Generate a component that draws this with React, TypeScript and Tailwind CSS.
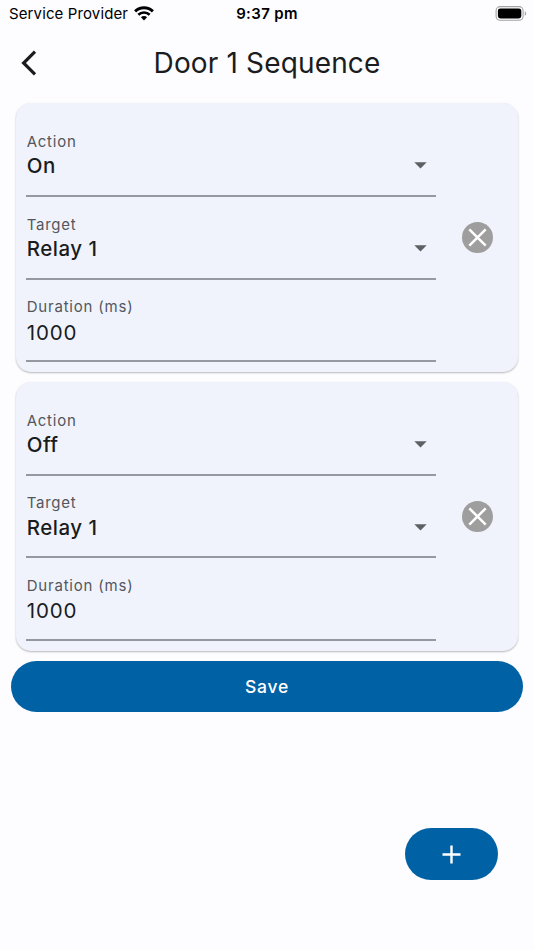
import { useState } from 'react';

type Step = {
  id: number;
  action: string;
  target: string;
  duration: number;
};

const initialSteps: Step[] = [
  { id: 1, action: 'On', target: 'Relay 1', duration: 1000 },
  { id: 2, action: 'Off', target: 'Relay 1', duration: 1000 },
];

function StatusBar() {
  return (
    <div className="grid h-7 grid-cols-3 items-center pl-[9px] pr-[7px] text-black">
      <div className="flex items-center gap-[6px]">
        <span className="whitespace-nowrap text-[15px] leading-7 tracking-[0.12px]">Service Provider</span>
        <svg width="20" height="15" viewBox="0 0 20 15" className="-mt-[2px] shrink-0" fill="none" stroke="currentColor">
          <path d="M1.1 5.4a12.8 12.8 0 0 1 17.8 0" strokeWidth="2.9" />
          <path d="M4.3 8.8a8.2 8.2 0 0 1 11.4 0" strokeWidth="2.6" />
          <path d="M10 14.4 6.9 11.3a4.4 4.4 0 0 1 6.2 0z" fill="currentColor" stroke="none" />
        </svg>
      </div>
      <span className="pr-[2px] text-center text-[15px] font-semibold leading-7 tracking-[0.35px]">9:37 pm</span>
      <svg width="32" height="15" viewBox="0 0 32 15" className="-mt-[2px] justify-self-end">
        <rect x="1.1" y="0.6" width="27" height="13.6" rx="4" fill="none" stroke="#a3a3a5" strokeWidth="1.1" />
        <rect x="2.9" y="2.4" width="23.4" height="10" rx="2.4" fill="#000" />
        <path d="M29.8 5.2v4.6c1.9-.8 1.9-3.8 0-4.6z" fill="#a3a3a5" />
      </svg>
    </div>
  );
}

function SelectField({ label, value }: { label: string; value: string }) {
  return (
    <div className="h-[82.6px] border-b-2 border-[#9598a0] pl-[0.7px] pt-[17.6px]">
      <p className="text-[15px] leading-5 tracking-[0.75px] text-[#53575d]">{label}</p>
      <div className="mt-[1.4px] flex h-[26px] items-center justify-between pr-[9px]">
        <span className="text-[20.5px] font-[450] leading-[26px] tracking-[0.5px] text-[#1a1c1e]">{value}</span>
        <svg width="13" height="7" viewBox="0 0 13 7" className="-mt-px">
          <path d="M0.3 0.3h12.4L6.5 6.5z" fill="#5e6063" />
        </svg>
      </div>
    </div>
  );
}

function TextField({ label, value }: { label: string; value: number }) {
  return (
    <div className="h-[82.6px] border-b-2 border-[#9598a0] pl-[0.7px] pt-[17.4px]">
      <p className="text-[15px] leading-5 tracking-[0.8px] text-[#53575d]">{label}</p>
      <p className="mt-[2.6px] text-[20.5px] leading-[26px] tracking-[0.9px] text-[#1a1c1e]">{value}</p>
    </div>
  );
}

function StepCard({ step, onRemove }: { step: Step; onRemove: () => void }) {
  return (
    <div className="flex h-[269px] items-center justify-between rounded-[15px] bg-[#f0f3fb] pl-[10.5px] pr-[25.5px] shadow-[0_1px_2px_rgba(0,0,0,0.28)]">
      <div className="w-[410px] pt-[1px]">
        <SelectField label="Action" value={step.action} />
        <SelectField label="Target" value={step.target} />
        <TextField label="Duration (ms)" value={step.duration} />
      </div>
      <button onClick={onRemove} aria-label="Remove step">
        <svg width="31" height="31" viewBox="0 0 31 31">
          <circle cx="15.5" cy="15.5" r="15.5" fill="#9e9e9e" />
          <path d="M7.3 7.3 23.7 23.7M23.7 7.3 7.3 23.7" stroke="#fff" strokeWidth="2.5" />
        </svg>
      </button>
    </div>
  );
}

export default function App() {
  const [steps, setSteps] = useState(initialSteps);

  const addStep = () =>
    setSteps([...steps, { id: Date.now(), action: 'On', target: 'Relay 1', duration: 1000 }]);

  return (
    <div className="relative flex h-[950px] w-[534px] flex-col overflow-hidden bg-[#fdfcff] font-['Inter','Liberation_Sans',sans-serif]">
      <StatusBar />

      <header className="grid h-[75.3px] grid-cols-[60px_1fr_60px] items-center pb-[6px]">
        <button className="pl-[20.5px]" aria-label="Back">
          <svg width="16" height="26" viewBox="0 0 16 26" fill="none" stroke="#1a1c1e" strokeWidth="3.2">
            <path d="M14 1.6 2.6 13 14 24.4" />
          </svg>
        </button>
        <h1 className="text-center text-[28px] leading-9 tracking-[0.15px] text-[#1a1c1e]">Door 1 Sequence</h1>
      </header>

      <main className="flex flex-col gap-[9.6px] pl-[15.5px] pr-[15.7px]">
        {steps.map((step) => (
          <StepCard
            key={step.id}
            step={step}
            onRemove={() => setSteps(steps.filter((s) => s.id !== step.id))}
          />
        ))}
      </main>

      <div className="pl-[10.6px] pr-[10.6px] pt-[10px]">
        <button className="h-[51.5px] w-full rounded-full bg-[#0061a4] text-[17.5px] font-[450] tracking-[0.7px] text-white">
          Save
        </button>
      </div>

      {/* Floating add button */}
      <button
        onClick={addStep}
        aria-label="Add step"
        className="absolute bottom-[70.2px] right-[36.5px] flex h-[51.5px] w-[92.5px] items-center justify-center rounded-full bg-[#0061a4]"
      >
        <svg width="19" height="19" viewBox="0 0 19 19" stroke="#fff" strokeWidth="2.4">
          <path d="M9.5 0.5v18M0.5 9.5h18" />
        </svg>
      </button>
    </div>
  );
}
